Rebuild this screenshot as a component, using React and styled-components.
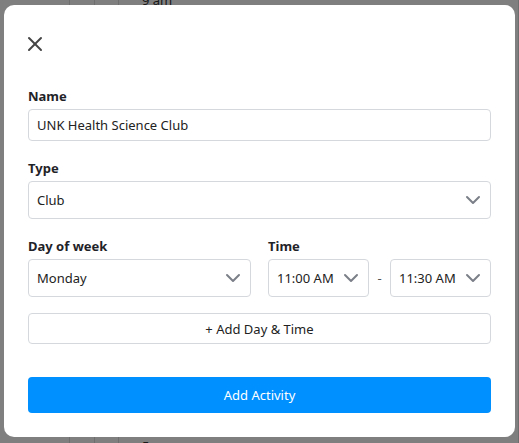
import React from 'react';
import styled, { createGlobalStyle } from 'styled-components';
import { X, ChevronDown } from 'lucide-react';

const GlobalStyle = createGlobalStyle`
	* { box-sizing: border-box; }
	body {
		margin: 0;
		font-family: "Noto Sans", "Open Sans", Arial, sans-serif;
		color: #222;
		background: #fff;
	}
`;

const Page = styled.div`
	position: relative;
	width: 519px;
	height: 443px;
	overflow: hidden;
`;

const Calendar = styled.div`
	display: grid;
	grid-template-columns: 70px 25px 24px 1fr;
	height: 100%;
`;

const CalColumn = styled.div`
	border-right: 1px solid #dcdcdc;
	display: flex;
	flex-direction: column;
	justify-content: space-between;
	padding-left: 23px;
	font-size: 13px;
	color: #333;
`;

const HourLabel = styled.span`
	margin: ${p => (p.$bottom ? '0 0 -12px' : '-9px 0 0')};
`;

const Overlay = styled.div`
	position: absolute;
	inset: 0;
	background: rgba(0, 0, 0, 0.5);
	padding: 5px 4px 6px 4px;
`;

const Modal = styled.div`
	width: 511px;
	height: 432px;
	background: #fff;
	border-radius: 10px;
	padding: 24px;
	display: flex;
	flex-direction: column;
`;

const CloseButton = styled.button`
	align-self: flex-start;
	border: none;
	background: none;
	padding: 0;
	margin: 3px 0 0 -5px;
	color: #444;
	display: flex;
	cursor: pointer;
`;

const Field = styled.div`
	display: flex;
	flex-direction: column;
	margin-top: ${p => p.$top}px;
`;

const Label = styled.label`
	font-size: 13px;
	font-weight: 700;
	line-height: 18px;
	color: #1f2328;
	margin-bottom: 4px;
`;

const TextInput = styled.div`
	height: 32px;
	border: 1px solid #d5d8dd;
	border-radius: 4px;
	padding: 0 8px;
	display: flex;
	align-items: center;
	font-size: 13px;
	color: #222;
`;

const SelectBox = styled.div`
	height: 38px;
	flex: ${p => (p.$fixed ? '0 0 101px' : 'none')};
	border: 1px solid #d5d8dd;
	border-radius: 4px;
	padding: 0 5px 0 8px;
	display: flex;
	align-items: center;
	justify-content: space-between;
	font-size: 13px;
	color: #222;
	svg { color: #7b7f88; }
`;

const TwoCols = styled.div`
	display: grid;
	grid-template-columns: 1fr 1fr;
	column-gap: 17px;
	margin-top: 18px;
`;

const TimeRow = styled.div`
	display: flex;
	align-items: center;
`;

const Dash = styled.span`
	flex: 1;
	text-align: center;
	font-size: 13px;
	color: #555;
`;

const OutlineButton = styled.button`
	margin-top: 16px;
	height: 31px;
	border: 1px solid #d5d8dd;
	border-radius: 4px;
	background: #fff;
	font-family: inherit;
	font-size: 13px;
	color: #222;
	cursor: pointer;
`;

const PrimaryButton = styled.button`
	margin-top: 33px;
	height: 36px;
	border: none;
	border-radius: 4px;
	background: #0090ff;
	font-family: inherit;
	font-size: 13px;
	color: #fff;
	cursor: pointer;
`;

const Select = ({ value, fixed }) => (
	<SelectBox $fixed={fixed}>
		<span>{value}</span>
		<ChevronDown size={24} strokeWidth={2} />
	</SelectBox>
);

export default function App() {
	return (
		<>
			<GlobalStyle />
			<Page>
				<Calendar>
					<CalColumn />
					<CalColumn />
					<CalColumn />
					<CalColumn>
						<HourLabel>9 am</HourLabel>
						<HourLabel $bottom>5 pm</HourLabel>
					</CalColumn>
				</Calendar>
				<Overlay>
					<Modal>
						<CloseButton aria-label="Close">
							<X size={24} strokeWidth={2} />
						</CloseButton>

						<Field $top={31}>
							<Label>Name</Label>
							<TextInput>UNK Health Science Club</TextInput>
						</Field>

						<Field $top={18}>
							<Label>Type</Label>
							<Select value="Club" />
						</Field>

						<TwoCols>
							<Field $top={0}>
								<Label>Day of week</Label>
								<Select value="Monday" />
							</Field>
							<Field $top={0}>
								<Label>Time</Label>
								<TimeRow>
									<Select value="11:00 AM" fixed />
									<Dash>-</Dash>
									<Select value="11:30 AM" fixed />
								</TimeRow>
							</Field>
						</TwoCols>

						<OutlineButton>+ Add Day &amp; Time</OutlineButton>
						<PrimaryButton>Add Activity</PrimaryButton>
					</Modal>
				</Overlay>
			</Page>
		</>
	);
}
